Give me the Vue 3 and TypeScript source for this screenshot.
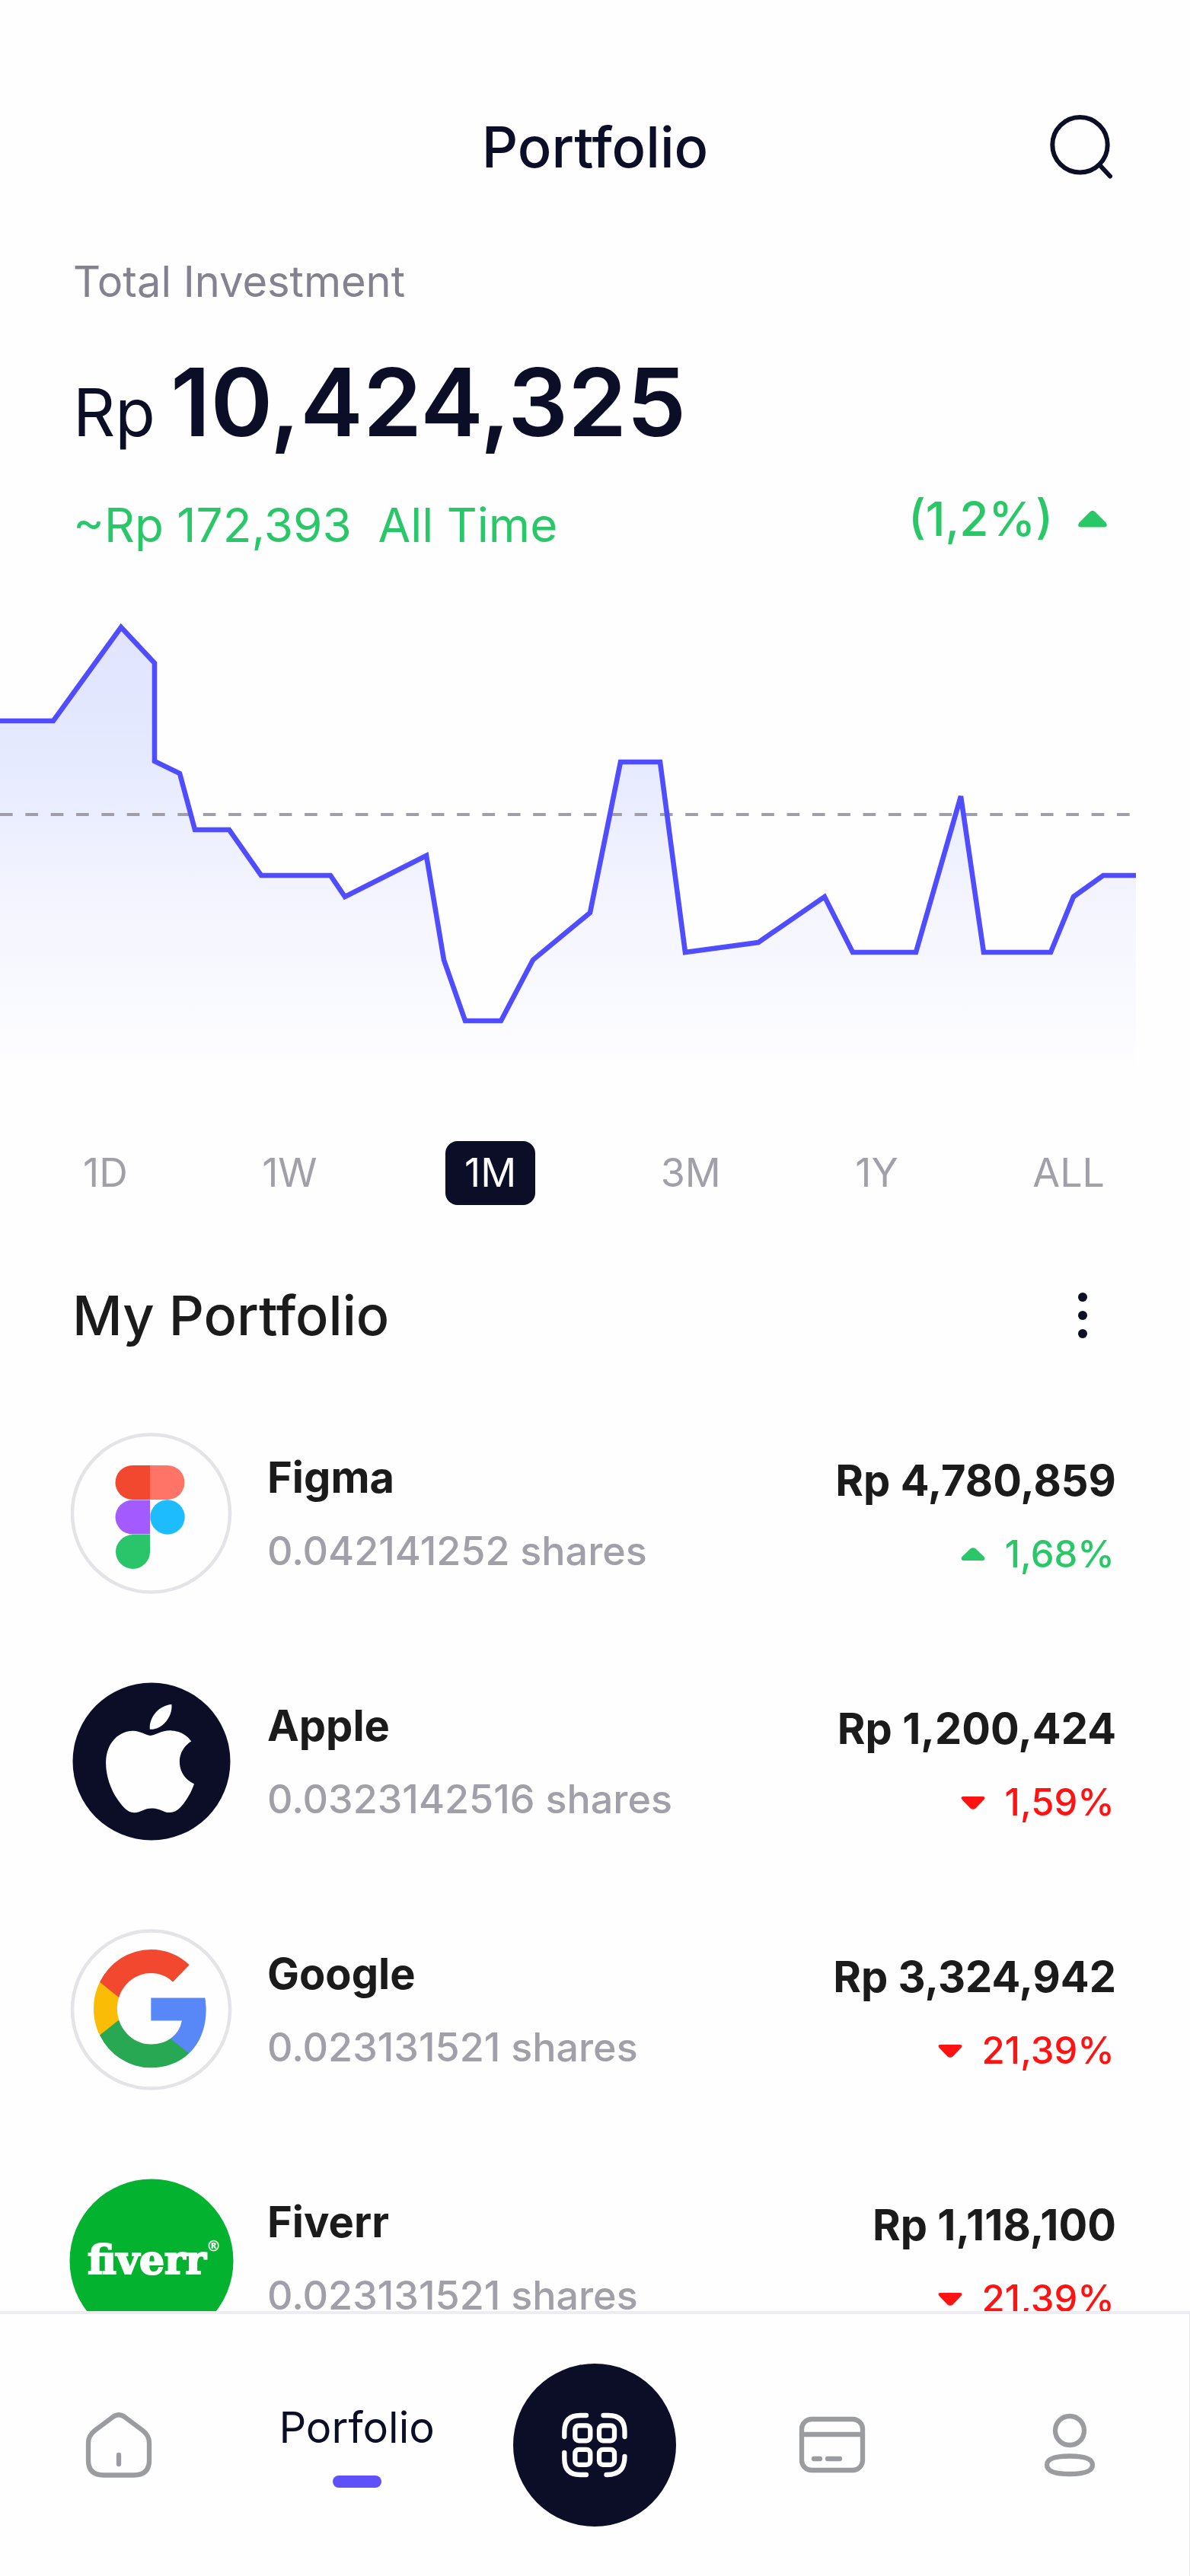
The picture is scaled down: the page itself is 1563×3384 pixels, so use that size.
<script setup lang="ts">
import { ref } from 'vue'

interface Holding {
  id: string
  name: string
  shares: string
  value: string
  change: string
  up: boolean
}

const ranges: string[] = ['1D', '1W', '1M', '3M', '1Y', 'ALL']
const activeRange = ref('1M')

const holdings: Holding[] = [
  { id: 'figma', name: 'Figma', shares: '0.042141252 shares', value: 'Rp 4,780,859', change: '1,68%', up: true },
  { id: 'apple', name: 'Apple', shares: '0.0323142516 shares', value: 'Rp 1,200,424', change: '1,59%', up: false },
  { id: 'google', name: 'Google', shares: '0.023131521 shares', value: 'Rp 3,324,942', change: '21,39%', up: false },
  { id: 'fiverr', name: 'Fiverr', shares: '0.023131521 shares', value: 'Rp 1,118,100', change: '21,39%', up: false },
]

const points: [number, number][] = [
  [-4, 147], [70, 147], [159, 24], [203, 71], [203, 200], [236, 216], [256, 290], [301, 290],
  [343, 350], [434, 350], [453, 378], [560, 324], [583, 461], [611, 541], [658, 541], [700, 461],
  [775, 399], [815, 201], [867, 201], [900, 451], [996, 438], [1083, 378], [1120, 451], [1203, 451],
  [1262, 246], [1292, 451], [1380, 451], [1410, 378], [1449, 350], [1492, 350],
]
const line = points.map((p) => p.join(',')).join(' ')
const area = `-4,620 ${line} 1492,620`
</script>

<template>
  <div class="app">
    <main class="content">
      <header class="header">
        <h1 class="title">Portfolio</h1>
        <button class="icon-button search" type="button" aria-label="Search">
          <svg width="96" height="96" viewBox="0 0 96 96" fill="none" stroke="#0c0d26" stroke-width="6" stroke-linecap="round">
            <circle cx="48.5" cy="45.3" r="36.2" />
            <path d="M75 72.5 88 86.5" />
          </svg>
        </button>
      </header>

      <section class="summary">
        <p class="label">Total Investment</p>
        <p class="total"><span class="currency">Rp</span><span>10,424,325</span></p>
        <div class="gain">
          <span class="gain-amount">~Rp 172,393&nbsp; All Time</span>
          <span class="gain-rate">
            (1,2%)
            <svg width="40" height="24" viewBox="0 0 40 24" fill="#2ac769">
              <path d="M16.5 2.5Q20-1 23.5 2.5L37.5 16.5Q41 22 35.5 22.5H4.5Q-1 22 2.5 16.5Z" />
            </svg>
          </span>
        </div>
      </section>

      <svg class="chart" viewBox="0 0 1563 620" fill="none" role="img" aria-label="Portfolio value over one month">
        <defs>
          <linearGradient id="area-fill" gradientUnits="userSpaceOnUse" x1="0" y1="24" x2="0" y2="612">
            <stop offset="0" stop-color="#e0e4fe" />
            <stop offset="0.3" stop-color="#e6eafe" />
            <stop offset="0.6" stop-color="#f3f4fe" />
            <stop offset="1" stop-color="#fefefe" />
          </linearGradient>
        </defs>
        <polygon :points="area" fill="url(#area-fill)" />
        <path d="M0 270H1484" stroke="#a09fa8" stroke-width="4" stroke-dasharray="16.67 16.67" />
        <polyline :points="line" stroke="#504cff" stroke-width="6.6" />
      </svg>

      <div class="ranges">
        <button
          v-for="range in ranges"
          :key="range"
          type="button"
          class="range"
          :class="{ active: range === activeRange }"
          @click="activeRange = range"
        >
          {{ range }}
        </button>
      </div>

      <section class="portfolio">
        <div class="section-head">
          <h2 class="section-title">My Portfolio</h2>
          <button class="icon-button" type="button" aria-label="More options">
            <svg width="88" height="88" viewBox="0 0 88 88" fill="#0c0d26">
              <circle cx="44" cy="20" r="6" />
              <circle cx="44" cy="44" r="6" />
              <circle cx="44" cy="68" r="6" />
            </svg>
          </button>
        </div>

        <ul class="holdings">
          <li v-for="item in holdings" :key="item.id" class="holding">
            <svg class="logo" width="216" height="216" viewBox="0 0 216 216" fill="none">
              <template v-if="item.id === 'figma'">
                <circle cx="107.5" cy="108" r="103.5" fill="#fefefe" stroke="#e4e4e8" stroke-width="4.5" />
                <path d="M106 45H83a22.5 22.5 0 0 0 0 45h23z" fill="#f24830" />
                <path d="M106 45h23a22.5 22.5 0 0 1 0 45h-23z" fill="#ff7466" />
                <path d="M106 90.500H83a22.5 22.5 0 0 0 0 45h23z" fill="#a35bff" />
                <circle cx="129" cy="113" r="22.7" fill="#1dbcff" />
                <path d="M106 136H83a22.5 22.5 0 1 0 23 22.5z" fill="#2ac56a" />
              </template>
              <template v-else-if="item.id === 'apple'">
                <circle cx="108" cy="108" r="103.5" fill="#0c0d26" />
                <path
                  transform="translate(34.9 33) scale(5.93)"
                  fill="#fefefe"
                  d="M12.152 6.896c-.948 0-2.415-1.078-3.960-1.040-2.040.027-3.910 1.183-4.961 3.014-2.117 3.675-.546 9.103 1.519 12.090 1.013 1.454 2.208 3.090 3.792 3.039 1.520-.065 2.090-.987 3.935-.987 1.831 0 2.350.987 3.960.948 1.637-.026 2.676-1.480 3.676-2.948 1.156-1.688 1.636-3.325 1.662-3.415-.039-.013-3.182-1.221-3.220-4.857-.026-3.040 2.480-4.494 2.597-4.559-1.429-2.090-3.623-2.324-4.390-2.376-2-.156-3.675 1.090-4.610 1.090zM15.530 3.830c.843-1.012 1.400-2.427 1.245-3.830-1.207.052-2.662.805-3.532 1.818-.780.896-1.454 2.338-1.273 3.714 1.338.104 2.715-.688 3.559-1.701"
                />
              </template>
              <template v-else-if="item.id === 'google'">
                <circle cx="107.5" cy="108" r="103.5" fill="#fefefe" stroke="#e4e4e8" stroke-width="4.5" />
                <g transform="translate(32 29) scale(8.37 8.63)">
                  <path fill="#5888f8" d="M17.640 9.205c0-.638-.057-1.252-.164-1.841H9v3.481h4.844a4.140 4.140 0 0 1-1.796 2.716v2.258h2.908c1.702-1.567 2.684-3.874 2.684-6.614z" />
                  <path fill="#28a852" d="M9 18c2.430 0 4.467-.806 5.956-2.180l-2.908-2.259c-.806.540-1.837.860-3.048.860-2.344 0-4.328-1.584-5.036-3.711H.957v2.332A8.997 8.997 0 0 0 9 18z" />
                  <path fill="#fbbc05" d="M3.964 10.710A5.410 5.410 0 0 1 3.682 9c0-.593.102-1.170.282-1.710V4.958H.957A8.996 8.996 0 0 0 0 9c0 1.452.348 2.827.957 4.042l3.007-2.332z" />
                  <path fill="#f24830" d="M9 3.580c1.321 0 2.508.454 3.440 1.345l2.582-2.580C13.463.891 11.426 0 9 0A8.997 8.997 0 0 0 .957 4.958L3.964 7.290C4.672 5.163 6.656 3.580 9 3.580z" />
                </g>
              </template>
              <template v-else>
                <circle cx="108" cy="112" r="107.5" fill="#03b22e" />
                <text class="wordmark" x="24" y="129">fiverr</text>
                <text class="registered" x="180" y="99">®</text>
              </template>
            </svg>
            <div class="info">
              <span class="name">{{ item.name }}</span>
              <span class="shares">{{ item.shares }}</span>
            </div>
            <div class="figures">
              <span class="value">{{ item.value }}</span>
              <span class="change" :class="item.up ? 'up' : 'down'">
                <svg width="32" height="18" viewBox="0 0 32 18" fill="currentColor">
                  <path v-if="item.up" d="M12.5 1.5Q16-1 19.5 1.5L30.5 12Q33 16.5 29 17H3Q-1 16.5 1.5 12Z" />
                  <path v-else d="M12.5 16.5Q16 19 19.5 16.5L30.5 5Q33 1.5 29 1H3Q-1 1.5 1.5 5Z" />
                </svg>
                {{ item.change }}
              </span>
            </div>
          </li>
        </ul>
      </section>
    </main>

    <nav class="tabbar" aria-label="Main">
      <a class="tab" href="#home" aria-label="Home">
        <svg width="120" height="120" viewBox="0 0 120 120" fill="none" stroke="#9b9ca0" stroke-width="6.3" stroke-linecap="round">
          <path d="M53 22.500Q60 18 67 22.500L91 40.500Q100 47.500 100 57V80Q100 99.500 80 99.500H40Q20 99.500 20 80V57Q20 47.500 29 40.500Z" />
          <path d="M60 73V85" />
        </svg>
      </a>
      <a class="tab current" href="#portfolio" aria-current="page">
        <span>Porfolio</span>
        <span class="marker"></span>
      </a>
      <button class="tab scan" type="button" aria-label="Scan">
        <svg width="216" height="216" viewBox="0 0 216 216" fill="none" stroke="#fefefe" stroke-width="6.3" stroke-linecap="round">
          <circle cx="108" cy="108" r="107" fill="#0c0d26" stroke="none" />
          <path d="M68.300 97V90Q68.300 69 89 69H97M119.500 69H126Q147.500 69 147.500 90V97M147.500 123Q147.500 147 124.500 147H123.500M97 147H89Q68.300 147 68.300 126V118" />
          <rect x="82.3" y="82.3" width="20" height="20" rx="5" />
          <rect x="114" y="82.3" width="20" height="20" rx="5" />
          <rect x="82.3" y="113.8" width="20" height="20" rx="5" />
          <rect x="114" y="113.8" width="20" height="20" rx="5" />
        </svg>
      </button>
      <a class="tab" href="#cards" aria-label="Cards">
        <svg width="120" height="120" viewBox="0 0 120 120" fill="none" stroke="#9b9ca0" stroke-width="6.3" stroke-linecap="round">
          <rect x="20" y="26" width="80" height="67" rx="13" />
          <path d="M20 46H100M36 78H44M54 78H70" />
        </svg>
      </a>
      <a class="tab" href="#profile" aria-label="Profile">
        <svg width="120" height="120" viewBox="0 0 120 120" fill="none" stroke="#9b9ca0" stroke-width="6.3">
          <circle cx="59" cy="41" r="19" />
          <path d="M59 74.500Q89 74.500 89 86Q89 98 59 98Q29 98 29 86Q29 74.500 59 74.500Z" />
        </svg>
      </a>
    </nav>
  </div>
</template>

<style>
body {
  margin: 0;
  background: #fefefe;
}
</style>

<style scoped>
.app {
  display: flex;
  flex-direction: column;
  height: 100vh;
  color: #1b1b1b;
  background: #fefefe;
  font-family: Inter, Roboto, sans-serif;
}

.content {
  flex: 1;
  min-height: 0;
  overflow: hidden;
}

h1,
h2,
p,
ul {
  margin: 0;
  padding: 0;
}

svg {
  display: block;
  flex: none;
}

button {
  padding: 0;
  border: 0;
  background: none;
  font: inherit;
  cursor: pointer;
}

.header {
  display: grid;
  grid-template-columns: 1fr auto 1fr;
  align-items: center;
  padding: 145px 97px 0;
}

.title {
  grid-column: 2;
  color: #0c0d26;
  font-size: 74px;
  line-height: 96px;
  font-weight: 500;
}

.search {
  justify-self: end;
}

.summary {
  padding: 93px 96px 0;
}

.label {
  color: #83828e;
  font-size: 56px;
  line-height: 72px;
}

.total {
  display: flex;
  align-items: baseline;
  gap: 20px;
  margin-top: 50px;
  color: #0c0d26;
  font-size: 124px;
  line-height: 144px;
  font-weight: 600;
}

.currency {
  font-size: 86px;
  line-height: 88px;
  font-weight: 400;
}

.gain {
  display: flex;
  justify-content: space-between;
  align-items: flex-start;
  margin-top: 50px;
  padding-right: 12px;
  color: #2ac769;
  font-size: 62px;
  line-height: 80px;
}

.gain-rate {
  display: flex;
  align-items: center;
  gap: 32px;
  line-height: 64px;
  font-weight: 500;
}

.chart {
  width: 100%;
  height: auto;
  margin-top: 70px;
}

.ranges {
  display: flex;
  justify-content: space-between;
  margin-top: 79px;
  padding: 0 88px 0 85px;
}

.range {
  padding: 0 24px;
  border-radius: 16px;
  color: #a1a0a8;
  font-size: 52px;
  line-height: 84px;
}

.range.active {
  margin: 0 12px 0 16px;
  padding: 0 25px;
  color: #fefefe;
  background: #0c0d26;
}

.portfolio {
  padding: 101px 97px 0 91px;
}

.section-head {
  display: flex;
  justify-content: space-between;
  align-items: center;
  padding-left: 4px;
}

.section-title {
  font-size: 72px;
  line-height: 88px;
  font-weight: 500;
}

.holdings {
  display: flex;
  flex-direction: column;
  gap: 110px;
  margin-top: 108px;
  list-style: none;
}

.holding {
  display: flex;
  align-items: center;
  gap: 44px;
}

.logo {
  overflow: visible;
}

.wordmark {
  fill: #fefefe;
  stroke: #fefefe;
  stroke-width: 2px;
  font: bold 52px "DejaVu Serif", serif;
}

.registered {
  fill: #fefefe;
  font: bold 19px "DejaVu Sans", sans-serif;
}

.info,
.figures {
  display: flex;
  flex-direction: column;
  gap: 33px;
  line-height: 64px;
}

.info {
  padding-top: 2px;
}

.figures {
  align-items: flex-end;
  margin-left: auto;
  padding-top: 10px;
}

.name,
.value {
  font-size: 56px;
  font-weight: 700;
}

.shares {
  color: #a1a0a8;
  font-size: 52px;
  font-weight: 500;
}

.change {
  display: flex;
  align-items: center;
  gap: 26px;
  padding-right: 2px;
  font-size: 49px;
  font-weight: 500;
}

.up {
  color: #2ac769;
}

.down {
  color: #ff1212;
}

.tabbar {
  display: grid;
  grid-template-columns: repeat(5, 1fr);
  align-items: center;
  height: 344px;
  border-top: 4px solid #ececf1;
  border-right: 1px solid #e4e4e8;
  background: #fefefe;
}

.tab {
  display: flex;
  flex-direction: column;
  align-items: center;
  color: #0c0d26;
  font-size: 56px;
  line-height: 64px;
  text-decoration: none;
}

.current {
  gap: 31px;
  padding-top: 1px;
}

.marker {
  width: 64px;
  height: 16px;
  border-radius: 8px;
  background: #5f51fa;
}
</style>
